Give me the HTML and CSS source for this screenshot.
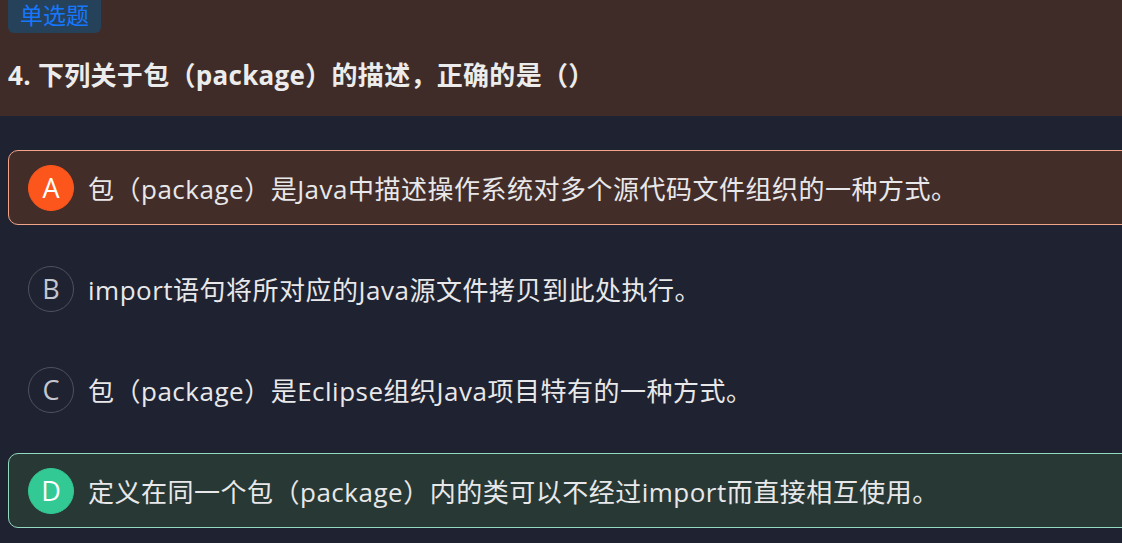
FILE: index.html
```html
<!DOCTYPE html>
<html lang="zh-CN">
<head>
<meta charset="utf-8">
<link rel="stylesheet" href="styles.css">
</head>
<body>
<div class="page">
  <div class="header">
    <div class="badge">单选题</div>
    <div class="title">4. 下列关于包（package）的描述，正确的是（）</div>
  </div>
  <div class="options">
    <div class="option wrong">
      <span class="letter">A</span>
      <span class="text">包（package）是Java中描述操作系统对多个源代码文件组织的一种方式。</span>
    </div>
    <div class="option">
      <span class="letter">B</span>
      <span class="text">import语句将所对应的Java源文件拷贝到此处执行。</span>
    </div>
    <div class="option">
      <span class="letter">C</span>
      <span class="text">包（package）是Eclipse组织Java项目特有的一种方式。</span>
    </div>
    <div class="option right">
      <span class="letter">D</span>
      <span class="text">定义在同一个包（package）内的类可以不经过import而直接相互使用。</span>
    </div>
  </div>
</div>
</body>
</html>
```
FILE: styles.css
```css
html, body {
  margin: 0;
  padding: 0;
  background: #1f2230;
  overflow: hidden;
  font-family: "Open Sans", "Noto Sans CJK SC", sans-serif;
}
.page {
  width: 1150px;
}
.header {
  background: #3f2c29;
  height: 116px;
  padding: 0 8px;
  box-sizing: border-box;
  overflow: hidden;
}
.badge {
  display: inline-block;
  height: 33px;
  line-height: 30px;
  padding: 0 12px;
  font-size: 23px;
  color: #1677ff;
  background: #25425a;
  border-radius: 0 0 6px 6px;
}
.title {
  margin-top: 24px;
  font-size: 26px;
  line-height: 36px;
  font-weight: bold;
  letter-spacing: 0.3px;
  color: #ececec;
}
.options {
  padding: 34px 0 0 8px;
  display: flex;
  flex-direction: column;
  gap: 26px;
}
.option {
  height: 75px;
  box-sizing: border-box;
  border: 1px solid transparent;
  border-radius: 10px;
  display: flex;
  align-items: center;
  padding-left: 19px;
  gap: 14px;
}
.option.wrong {
  background: #432d29;
  border-color: #f2a488;
}
.option.right {
  background: #283834;
  border-color: #93d9c0;
}
.letter {
  width: 46px;
  height: 46px;
  box-sizing: border-box;
  border-radius: 50%;
  border: 1px solid #4e5360;
  display: flex;
  align-items: center;
  justify-content: center;
  font-size: 27px;
  color: #c3c6cf;
  flex: none;
}
.wrong .letter {
  background: #fd561c;
  border-color: #fd561c;
  color: #ffffff;
}
.right .letter {
  background: #33c995;
  border-color: #33c995;
  color: #ffffff;
}
.text {
  font-size: 26px;
  letter-spacing: 0.5px;
  color: #e8e8ea;
  white-space: nowrap;
}
```
